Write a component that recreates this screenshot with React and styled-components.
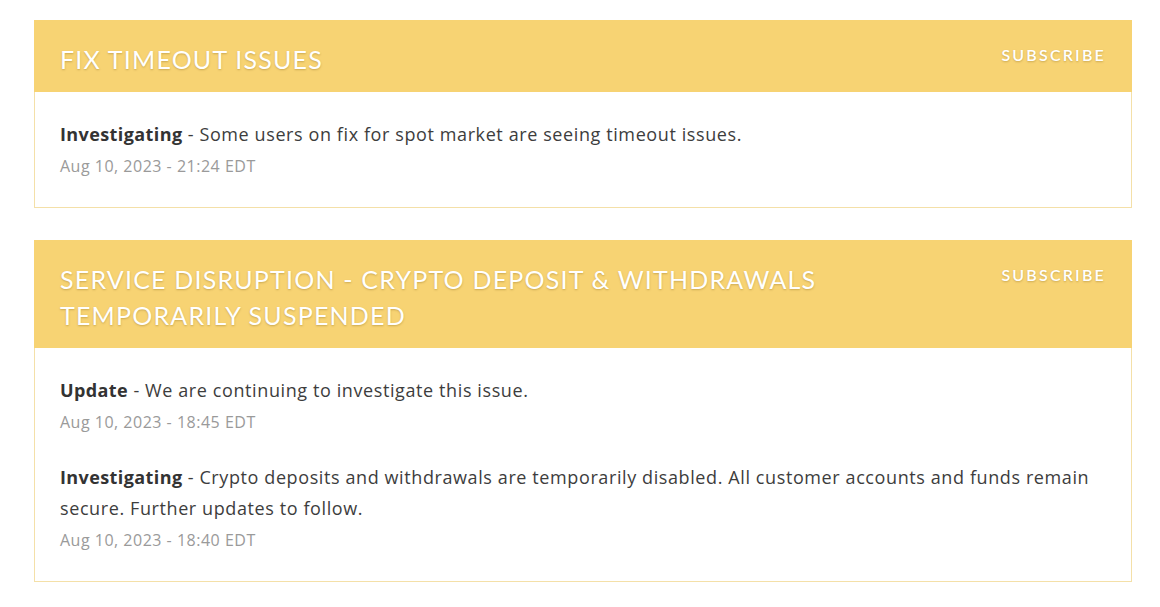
import React from "react";
import styled, { createGlobalStyle } from "styled-components";

const Global = createGlobalStyle`
  html, body { margin: 0; padding: 0; background: #ffffff; }
  body { font-family: "Open Sans", Lato, sans-serif; -webkit-font-smoothing: antialiased; }
`;

const Page = styled.div`
  padding: 20px 0 20px 34px;
  display: flex;
  flex-direction: column;
  gap: 32px;
`;

const Card = styled.section`
  width: 1098px;
  box-sizing: border-box;
`;

const Header = styled.header`
  background: #f7d373;
  display: flex;
  align-items: flex-start;
  justify-content: space-between;
  gap: 40px;
  padding: 21px 26px 15px 26px;
`;

const Title = styled.h2`
  margin: 0;
  font-family: Lato, sans-serif;
  font-size: 25px;
  line-height: 36px;
  font-weight: 400;
  letter-spacing: 1.2px;
  color: #ffffff;
  text-transform: uppercase;
  text-shadow: 0 1px 2px rgba(120, 90, 20, 0.35);
  max-width: 780px;
`;

const Subscribe = styled.a`
  flex: none;
  font-family: Lato, sans-serif;
  font-size: 16px;
  line-height: 36px;
  margin-top: -4px;
  letter-spacing: 2.2px;
  font-weight: 600;
  color: #ffffff;
  text-transform: uppercase;
  text-shadow: 0 1px 2px rgba(120, 90, 20, 0.35);
  cursor: pointer;
`;

const Body = styled.div`
  border: 1px solid #f4e0a8;
  border-top: none;
  padding: 27px 25px 29px 25px;
  display: flex;
  flex-direction: column;
  gap: 28px;
`;

const Update = styled.div`
  display: flex;
  flex-direction: column;
  gap: 4px;
`;

const Message = styled.p`
  margin: 0;
  font-size: 18px;
  line-height: 31px;
  letter-spacing: 0.6px;
  color: #3d3d3d;
  strong { font-weight: 700; color: #333333; letter-spacing: 0.4px; }
`;

const Stamp = styled.small`
  display: block;
  font-size: 16px;
  line-height: 24px;
  letter-spacing: 0.5px;
  color: #9a9a9a;
`;

const incidents = [
  {
    title: "Fix timeout issues",
    updates: [
      {
        status: "Investigating",
        text: "Some users on fix for spot market are seeing timeout issues.",
        time: "Aug 10, 2023 - 21:24 EDT",
      },
    ],
  },
  {
    title: "Service Disruption - Crypto Deposit & Withdrawals Temporarily Suspended",
    updates: [
      {
        status: "Update",
        text: "We are continuing to investigate this issue.",
        time: "Aug 10, 2023 - 18:45 EDT",
      },
      {
        status: "Investigating",
        text: "Crypto deposits and withdrawals are temporarily disabled. All customer accounts and funds remain secure. Further updates to follow.",
        time: "Aug 10, 2023 - 18:40 EDT",
      },
    ],
  },
];

export default function App() {
  return (
    <>
      <Global />
      <Page>
        {incidents.map((inc) => (
          <Card key={inc.title}>
            <Header>
              <Title>{inc.title}</Title>
              <Subscribe>Subscribe</Subscribe>
            </Header>
            <Body>
              {inc.updates.map((u) => (
                <Update key={u.time}>
                  <Message>
                    <strong>{u.status}</strong> - {u.text}
                  </Message>
                  <Stamp>{u.time}</Stamp>
                </Update>
              ))}
            </Body>
          </Card>
        ))}
      </Page>
    </>
  );
}
